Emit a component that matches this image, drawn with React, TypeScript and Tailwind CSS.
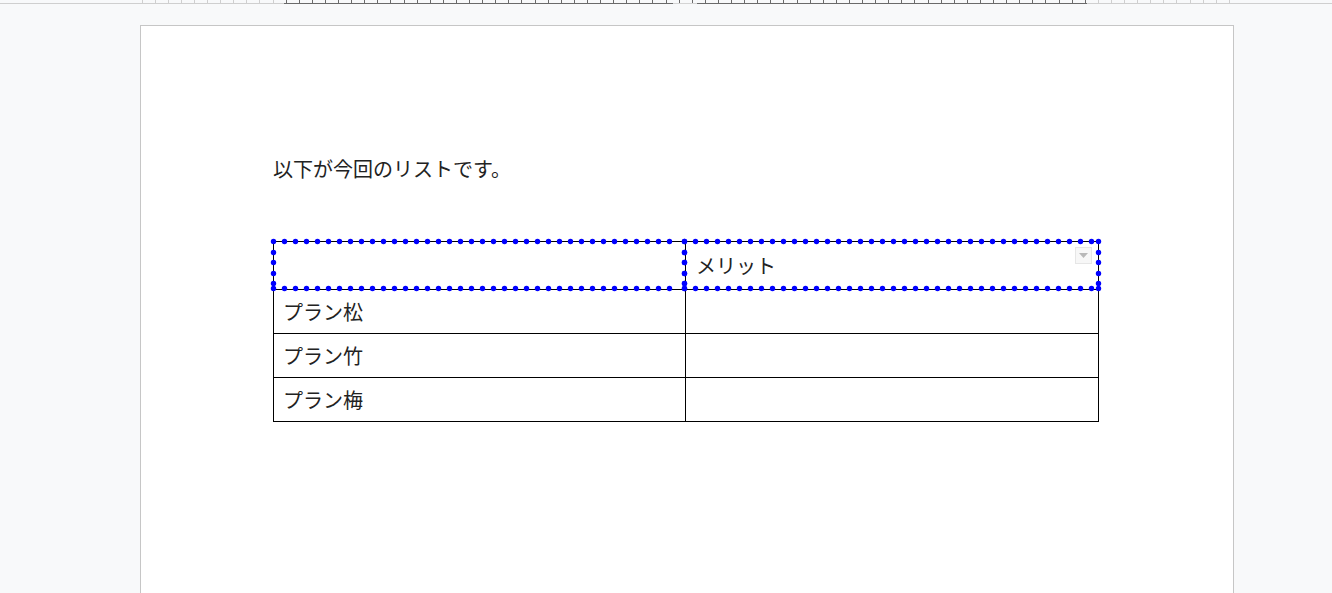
import React from "react";

const font = { fontFamily: '"Noto Sans CJK JP", "Noto Sans", sans-serif' };

function Ruler() {
  const ticks = Array.from({ length: 84 }, (_, i) => 141.5 + i * 13.1).filter((x) => x < 1234);
  return (
    <svg width="1332" height="5" viewBox="0 0 1332 5" className="block max-w-none">
      <line x1="0" y1="3.5" x2="1332" y2="3.5" stroke="#cfcfcf" strokeWidth="1" />
      <line x1="284" y1="3.5" x2="1087" y2="3.5" stroke="#6a6a6a" strokeWidth="1" />
      <line x1="673" y1="3.5" x2="697" y2="3.5" stroke="#d4d4d4" strokeWidth="1" />
      {ticks.map((x) => {
        const px = Math.round(x) + 0.5;
        const dark = x > 282 && x < 1089;
        return <line key={x} x1={px} y1="0" x2={px} y2="3" stroke={dark ? "#6a6a6a" : "#cfcfcf"} strokeWidth="1" />;
      })}
    </svg>
  );
}

// round dots along the edges of a box, snapped to pixel centres
function dotsFor(x0: number, y0: number, x1: number, y1: number) {
  const snap = (v: number) => Math.floor(v) + 0.5;
  const pts: [number, number][] = [];
  for (let x = x0; x < x1 - 4; x += 11) {
    pts.push([snap(x), y0], [snap(x), y1]);
  }
  pts.push([x1, y0], [x1, y1]);
  for (let y = y0 + 10.6; y < y1 - 3; y += 10.6) {
    pts.push([x0, snap(y)], [x1, snap(y)]);
  }
  return pts;
}

// selection outline drawn over the header row
function Selection() {
  const pts = [...dotsFor(5.5, 5.5, 416.5, 52.5), ...dotsFor(416.5, 5.5, 830.5, 52.5)];
  return (
    <svg
      width="837"
      height="60"
      viewBox="0 0 837 60"
      className="pointer-events-none absolute left-[-5px] top-[-5px] h-[60px] w-[837px] max-w-none"
    >
      {pts.map(([x, y], i) => (
        <circle key={i} cx={x} cy={y} r="2.7" fill="#0000ff" />
      ))}
    </svg>
  );
}

export default function App() {
  const rows = ["プラン松", "プラン竹", "プラン梅"];

  return (
    <div className="h-[593px] w-[1332px] overflow-hidden bg-[#f8f9fa]" style={font}>
      <Ruler />
      <div className="ml-[140px] mt-[20px] h-[700px] w-[1094px] border border-[#c6c6c6] bg-white pl-[132px] pt-[129px] text-[#222]">
        <p className="text-[20px] leading-[28px]">以下が今回のリストです。</p>

        <div className="relative mt-[58px] w-fit">
          <table className="w-[825px] table-fixed border-collapse text-[20px] leading-[28px]">
            <colgroup>
              <col className="w-[412px]" />
              <col className="w-[413px]" />
            </colgroup>
            <tbody>
              <tr className="h-[48px]">
                <td className="border border-black px-[10px]"></td>
                <td className="relative border border-black px-[10px]">
                  メリット
                  <div className="absolute right-[6px] top-[5px] flex h-[17px] w-[17px] items-center justify-center border border-[#e6e6e6] bg-[#f7f7f7]">
                    <svg width="9" height="5" viewBox="0 0 9 5">
                      <path d="M0 0h9L4.5 5z" fill="#b8b8b8" />
                    </svg>
                  </div>
                </td>
              </tr>
              {rows.map((r) => (
                <tr key={r} className="h-[44px]">
                  <td className="border border-black px-[9px]">{r}</td>
                  <td className="border border-black px-[10px]"></td>
                </tr>
              ))}
            </tbody>
          </table>
          <Selection />
        </div>
      </div>
    </div>
  );
}
